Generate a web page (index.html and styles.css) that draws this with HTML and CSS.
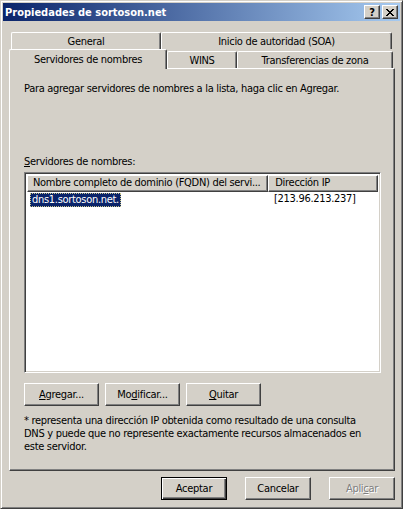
FILE: index.html
```html
<!DOCTYPE html>
<html lang="es">
<head>
    <meta charset="UTF-8">
    <title>Propiedades de sortoson.net</title>
    <link rel="stylesheet" href="styles.css">
</head>
<body>
    <div class="window">
        <div class="titlebar">
            <span class="title">Propiedades de sortoson.net</span>
            <div class="caption-buttons">
                <span class="cbtn help">?</span>
                <span class="cbtn close">
                    <svg width="8" height="7" viewBox="0 0 8 7"><path d="M0 0h2v1h-2zM6 0h2v1h-2zM1 1h2v1h-2zM5 1h2v1h-2zM2 2h4v1h-4zM3 3h2v1h-2zM2 4h4v1h-4zM1 5h2v1h-2zM5 5h2v1h-2zM0 6h2v1h-2zM6 6h2v1h-2z" fill="#000"/></svg>
                </span>
            </div>
        </div>

        <div class="dialog">
            <div class="tabs">
                <div class="tabrow back">
                    <div class="tab tab-general">General</div>
                    <div class="tab tab-soa">Inicio de autoridad (SOA)</div>
                </div>
                <div class="tabrow front">
                    <div class="tab selected tab-ns">Servidores de nombres</div>
                    <div class="tab tab-wins">WINS</div>
                    <div class="tab tab-xfer">Transferencias de zona</div>
                </div>
            </div>

            <div class="panel">
                <p class="intro">Para agregar servidores de nombres a la lista, haga clic en Agregar.</p>
                <p class="label"><u>S</u>ervidores de nombres:</p>

                <div class="listview">
                    <div class="lv-header">
                        <div class="lv-col col-name">Nombre completo de dominio (FQDN) del servi...</div>
                        <div class="lv-col col-ip">Dirección IP</div>
                    </div>
                    <div class="lv-row">
                        <div class="lv-cell col-name"><span class="lv-selected">dns1.sortoson.net.</span></div>
                        <div class="lv-cell col-ip">[213.96.213.237]</div>
                    </div>
                </div>

                <div class="panel-buttons">
                    <button class="btn"><u>A</u>gregar...</button>
                    <button class="btn">Mo<u>d</u>ificar...</button>
                    <button class="btn"><u>Q</u>uitar</button>
                </div>

                <p class="note">* representa una dirección IP obtenida como resultado de una consulta<br>DNS y puede que no represente exactamente recursos almacenados en<br>este servidor.</p>
            </div>

            <div class="footer">
                <button class="btn default">Aceptar</button>
                <button class="btn">Cancelar</button>
                <button class="btn" disabled>Apli<u>c</u>ar</button>
            </div>
        </div>
    </div>
</body>
</html>
```

FILE: styles.css
```css
body {
    margin: 0;
    background-color: #d4d0c8;
    font-family: "DejaVu Sans Condensed", "DejaVu Sans", sans-serif;
    font-stretch: condensed;
    font-size: 11px;
    letter-spacing: -0.3px;
    color: #000000;
}
.window {
    width: 403px;
    height: 509px;
    box-sizing: border-box;
    border: 1px solid;
    border-color: #d4d0c8 #404040 #404040 #d4d0c8;
    box-shadow: inset 1px 1px #ffffff, inset -1px -1px #808080;
    padding: 2px;
    display: flex;
    flex-direction: column;
}
.titlebar {
    height: 18px;
    flex: none;
    background: linear-gradient(to right, #0a246a, #a6caf0);
    display: flex;
    align-items: center;
    justify-content: space-between;
    padding: 0 2px;
    color: #ffffff;
    font-weight: bold;
    letter-spacing: 0;
}
.caption-buttons {
    display: flex;
    gap: 2px;
}
.cbtn {
    width: 16px;
    height: 14px;
    box-sizing: border-box;
    background-color: #d4d0c8;
    border: 1px solid;
    border-color: #ffffff #404040 #404040 #ffffff;
    box-shadow: inset -1px -1px #808080;
    display: flex;
    align-items: center;
    justify-content: center;
    color: #000000;
    font-size: 11px;
    font-weight: bold;
    line-height: 1;
}
.cbtn.close svg {
    display: block;
    margin-left: -1px;
}

.dialog {
    flex: 1;
    padding: 0 5px 0 6px;
}
.tabs {
    margin-top: 11px;
}
.tabrow {
    display: flex;
    align-items: flex-end;
}
.tabrow.back {
    height: 17px;
    padding-left: 2px;
}
.tabrow.front {
    height: 20px;
    margin-bottom: -1px;
    position: relative;
    z-index: 1;
}
.tab {
    box-sizing: border-box;
    background-color: #d4d0c8;
    border-top: 1px solid #ffffff;
    border-left: 1px solid #ffffff;
    border-right: 1px solid #404040;
    box-shadow: inset -1px 0 #808080;
    border-radius: 2px 2px 0 0;
    text-align: center;
    line-height: 15px;
    white-space: nowrap;
}
.tabrow.back .tab {
    height: 17px;
    padding-top: 1px;
}
.tabrow.front .tab {
    height: 17px;
    margin-bottom: 1px;
    padding-top: 1px;
}
.tabrow.front .tab.selected {
    height: 20px;
    margin-bottom: 0;
    padding-top: 2px;
}
.tab-general { width: 150px; }
.tab-soa { width: 231px; }
.tab-ns { width: 158px; }
.tab-wins { width: 70px; }
.tab-xfer { width: 156px; }

.panel {
    height: 403px;
    box-sizing: border-box;
    border: 1px solid;
    border-color: #ffffff #404040 #404040 #ffffff;
    box-shadow: inset -1px -1px #808080;
    padding: 13px 13px 0 14px;
}
.panel p {
    margin: 0;
    line-height: 13px;
}
.panel .label {
    margin-top: 60px;
}
.listview {
    margin-top: 4px;
    height: 201px;
    box-sizing: border-box;
    border: 1px solid;
    border-color: #808080 #ffffff #ffffff #808080;
    box-shadow: inset 1px 1px #404040, inset -1px -1px #d4d0c8;
    background-color: #ffffff;
    padding: 2px;
}
.lv-header {
    display: flex;
    height: 17px;
}
.lv-col {
    box-sizing: border-box;
    height: 17px;
    background-color: #d4d0c8;
    border: 1px solid;
    border-color: #ffffff #404040 #404040 #ffffff;
    box-shadow: inset -1px -1px #808080;
    line-height: 14px;
    white-space: nowrap;
    overflow: hidden;
}
.lv-header .col-name {
    width: 242px;
    padding-left: 5px;
}
.lv-header .col-ip {
    width: 110px;
    padding-left: 6px;
}
.lv-row {
    display: flex;
    margin-top: 1px;
    height: 14px;
    line-height: 12px;
}
.lv-row .col-name {
    width: 242px;
    padding-left: 3px;
    box-sizing: border-box;
}
.lv-row .col-ip {
    padding-left: 5px;
}
.lv-selected {
    display: inline-block;
    background-color: #0a246a;
    color: #ffffff;
    padding: 0 1px;
    border: 1px dotted #c8c48a;
}
.panel-buttons {
    display: flex;
    gap: 6px;
    margin-top: 10px;
}
.btn {
    width: 75px;
    height: 23px;
    box-sizing: border-box;
    font: inherit;
    font-stretch: condensed;
    letter-spacing: inherit;
    color: #000000;
    background-color: #d4d0c8;
    border: 1px solid;
    border-color: #ffffff #404040 #404040 #ffffff;
    box-shadow: inset -1px -1px #808080;
    padding: 0;
}
.btn.default {
    border-color: #000000;
    box-shadow: inset 1px 1px #ffffff, inset -1px -1px #404040, inset -2px -2px #808080;
}
.btn:disabled {
    color: #808080;
    text-shadow: 1px 1px #ffffff;
}
.panel .note {
    margin-top: 8px;
}
.footer {
    display: flex;
    justify-content: flex-end;
    gap: 18px;
    margin-top: 6px;
}
.footer .btn {
    width: 66px;
}
```
